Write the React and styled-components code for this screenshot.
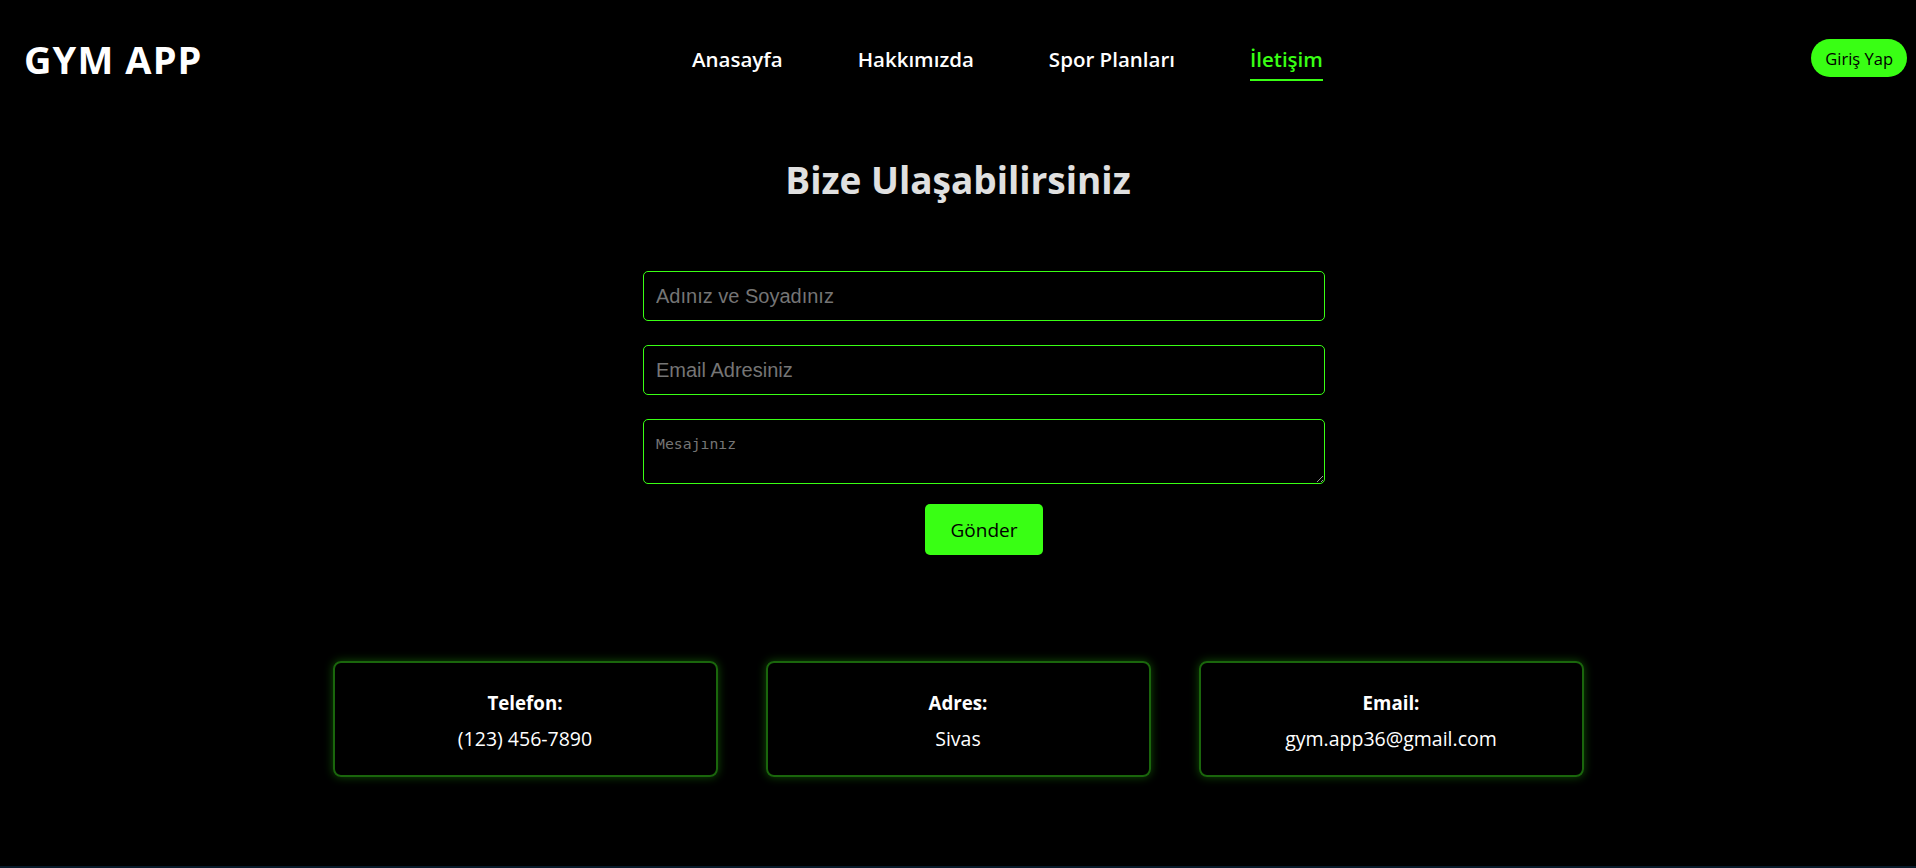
import React from "react";
import styled, { createGlobalStyle } from "styled-components";

const GREEN = "#39ff14";

const GlobalStyle = createGlobalStyle`
  * {
    box-sizing: border-box;
  }
  body {
    margin: 0;
    background-color: #071a2a;
    font-family: "Open Sans", "Noto Sans", sans-serif;
  }
`;

const App = () => {
  return (
    <Page>
      <GlobalStyle />
      <Header>
        <Logo>GYM APP</Logo>
        <Nav>
          <NavLink>Anasayfa</NavLink>
          <NavLink>Hakkımızda</NavLink>
          <NavLink>Spor Planları</NavLink>
          <NavLink active>İletişim</NavLink>
        </Nav>
        <LoginButton>Giriş Yap</LoginButton>
      </Header>

      <Main>
        <Title>Bize Ulaşabilirsiniz</Title>
        <Form onSubmit={e => e.preventDefault()}>
          <Input type="text" placeholder="Adınız ve Soyadınız" />
          <Input type="email" placeholder="Email Adresiniz" />
          <Textarea placeholder="Mesajınız" />
          <SendButton type="submit">Gönder</SendButton>
        </Form>

        <Cards>
          <Card>
            <CardTitle>Telefon:</CardTitle>
            <CardText>(123) 456-7890</CardText>
          </Card>
          <Card>
            <CardTitle>Adres:</CardTitle>
            <CardText>Sivas</CardText>
          </Card>
          <Card>
            <CardTitle>Email:</CardTitle>
            <CardText>gym.app36@gmail.com</CardText>
          </Card>
        </Cards>
      </Main>
    </Page>
  );
};

export default App;

const Page = styled.div`
  background-color: #000;
  height: 866px;
  color: #fff;
`;

const Header = styled.header`
  height: 116px;
  display: grid;
  grid-template-columns: 668px auto 1fr;
  align-items: center;
  padding: 0 9px 0 24px;
`;

const Logo = styled.div`
  font-size: 38px;
  font-weight: 700;
  color: #fff;
  letter-spacing: 1.1px;
  padding-top: 2px;
`;

const Nav = styled.nav`
  display: flex;
  gap: 75px;
  padding-top: 10px;
`;

const NavLink = styled.a`
  font-size: 20.5px;
  font-weight: 600;
  color: ${props => (props.active ? GREEN : "#fff")};
  padding-bottom: 6px;
  border-bottom: 2px solid ${props => (props.active ? GREEN : "transparent")};
  cursor: pointer;
`;

const LoginButton = styled.button`
  justify-self: end;
  height: 38px;
  padding: 0 14px;
  border: none;
  border-radius: 19px;
  background-color: ${GREEN};
  color: #000;
  font-family: "Open Sans", "Noto Sans", sans-serif;
  font-size: 16.5px;
  font-weight: 500;
  cursor: pointer;
`;

const Main = styled.main`
  display: flex;
  flex-direction: column;
  align-items: center;
`;

const Title = styled.h1`
  margin: 38px 0 0;
  font-size: 37px;
  font-weight: 700;
  color: #e0e0e0;
`;

const Form = styled.form`
  margin: 66px 0 0 52px;
  width: 682px;
  display: flex;
  flex-direction: column;
  align-items: center;
`;

const Input = styled.input`
  width: 100%;
  height: 50px;
  margin-bottom: 24px;
  padding: 0 12px;
  background-color: #000;
  border: 1px solid ${GREEN};
  border-radius: 5px;
  color: #fff;
  font-family: "Liberation Sans", Arial, sans-serif;
  font-size: 20px;
  outline: none;

  &::placeholder {
    color: #757575;
  }
`;

const Textarea = styled.textarea`
  width: 100%;
  height: 65px;
  padding: 15px 12px 12px;
  background-color: #000;
  border: 1px solid ${GREEN};
  border-radius: 5px;
  color: #fff;
  font-family: "DejaVu Sans Mono", monospace;
  font-size: 14.8px;
  outline: none;

  &::placeholder {
    color: #757575;
  }
`;

const SendButton = styled.button`
  margin-top: 20px;
  width: 118px;
  height: 51px;
  border: none;
  border-radius: 5px;
  background-color: ${GREEN};
  color: #000;
  font-family: "Open Sans", "Noto Sans", sans-serif;
  font-size: 19px;
  font-weight: 500;
  cursor: pointer;
`;

const Cards = styled.section`
  margin-top: 106px;
  display: grid;
  grid-template-columns: repeat(3, 385px);
  gap: 48px;
`;

const Card = styled.div`
  height: 116px;
  padding: 27px 10px 23px;
  border: 2px solid #1a660c;
  border-radius: 8px;
  box-shadow: 0 0 10px rgba(57, 255, 20, 0.3);
  display: flex;
  flex-direction: column;
  align-items: center;
  gap: 10px;
`;

const CardTitle = styled.div`
  font-size: 18.7px;
  font-weight: 700;
  line-height: 26px;
`;

const CardText = styled.div`
  font-size: 19.5px;
  line-height: 26px;
`;
